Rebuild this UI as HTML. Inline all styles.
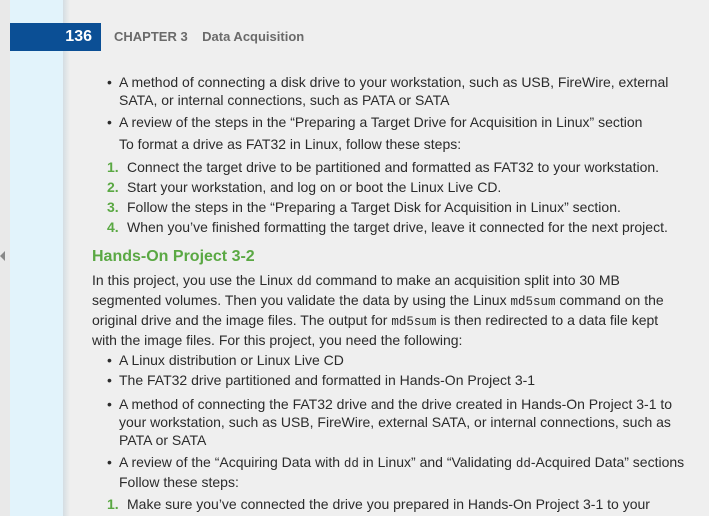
<!DOCTYPE html><html><head><style>
body{margin:0;width:709px;height:516px;overflow:hidden;background:#efefef;font-family:"Liberation Sans",sans-serif;color:#2b2b2b;position:relative}
.l{position:absolute;white-space:nowrap;font-size:14px;line-height:18px}
.b::before{content:"•";position:absolute;left:-12px}
.n{position:absolute;left:-20px;color:#5aa843;font-weight:bold}
code{font-family:"Liberation Mono",monospace;font-size:12.5px}
</style></head><body>
<div style="position:absolute;left:0;top:0;width:10px;height:516px;background:#e9e9e9"></div>
<div style="position:absolute;left:10px;top:0;width:53px;height:516px;background:#e2f3fb"></div>
<div style="position:absolute;left:63px;top:0;width:7px;height:516px;background:linear-gradient(90deg,#d4dde2,#efefef)"></div>
<div style="position:absolute;left:10px;top:23px;width:91px;height:28px;background:#0b4f95;color:#fff;font-weight:bold;font-size:16px;line-height:28px;text-align:right;box-sizing:border-box;padding-right:9px">136</div>
<div class="l" style="left:114px;top:28px;color:#6a6a6a;font-weight:bold;font-size:13px">CHAPTER 3&nbsp;&nbsp;&nbsp;&nbsp;Data Acquisition</div>
<div style="position:absolute;left:0;top:251px;width:0;height:0;border-top:5px solid transparent;border-bottom:5px solid transparent;border-right:5px solid #888"></div>

<div class="l b" style="left:119px;top:73px">A method of connecting a disk drive to your workstation, such as USB, FireWire, external</div>
<div class="l" style="left:119px;top:91px">SATA, or internal connections, such as PATA or SATA</div>
<div class="l b" style="left:119px;top:113px">A review of the steps in the “Preparing a Target Drive for Acquisition in Linux” section</div>
<div class="l" style="left:119px;top:135px">To format a drive as FAT32 in Linux, follow these steps:</div>
<div class="l" style="left:127px;top:158px"><span class="n">1.</span>Connect the target drive to be partitioned and formatted as FAT32 to your workstation.</div>
<div class="l" style="left:127px;top:178px"><span class="n">2.</span>Start your workstation, and log on or boot the Linux Live CD.</div>
<div class="l" style="left:127px;top:198px"><span class="n">3.</span>Follow the steps in the “Preparing a Target Disk for Acquisition in Linux” section.</div>
<div class="l" style="left:127px;top:218px"><span class="n">4.</span>When you’ve finished formatting the target drive, leave it connected for the next project.</div>
<div class="l" style="left:92px;top:248px;font-size:16px;font-weight:bold;color:#5aa843">Hands-On Project 3-2</div>
<div class="l" style="left:92px;top:271px">In this project, you use the Linux <code>dd</code> command to make an acquisition split into 30 MB</div>
<div class="l" style="left:92px;top:291px">segmented volumes. Then you validate the data by using the Linux <code>md5sum</code> command on the</div>
<div class="l" style="left:92px;top:311px">original drive and the image files. The output for <code>md5sum</code> is then redirected to a data file kept</div>
<div class="l" style="left:92px;top:331px">with the image files. For this project, you need the following:</div>
<div class="l b" style="left:119px;top:351px">A Linux distribution or Linux Live CD</div>
<div class="l b" style="left:119px;top:371px">The FAT32 drive partitioned and formatted in Hands-On Project 3-1</div>
<div class="l b" style="left:119px;top:395px">A method of connecting the FAT32 drive and the drive created in Hands-On Project 3-1 to</div>
<div class="l" style="left:119px;top:413px">your workstation, such as USB, FireWire, external SATA, or internal connections, such as</div>
<div class="l" style="left:119px;top:431px">PATA or SATA</div>
<div class="l b" style="left:119px;top:453px">A review of the “Acquiring Data with <code>dd</code> in Linux” and “Validating <code>dd</code>-Acquired Data” sections</div>
<div class="l" style="left:119px;top:473px">Follow these steps:</div>
<div class="l" style="left:127px;top:495px"><span class="n">1.</span>Make sure you’ve connected the drive you prepared in Hands-On Project 3-1 to your</div>
</body></html>
